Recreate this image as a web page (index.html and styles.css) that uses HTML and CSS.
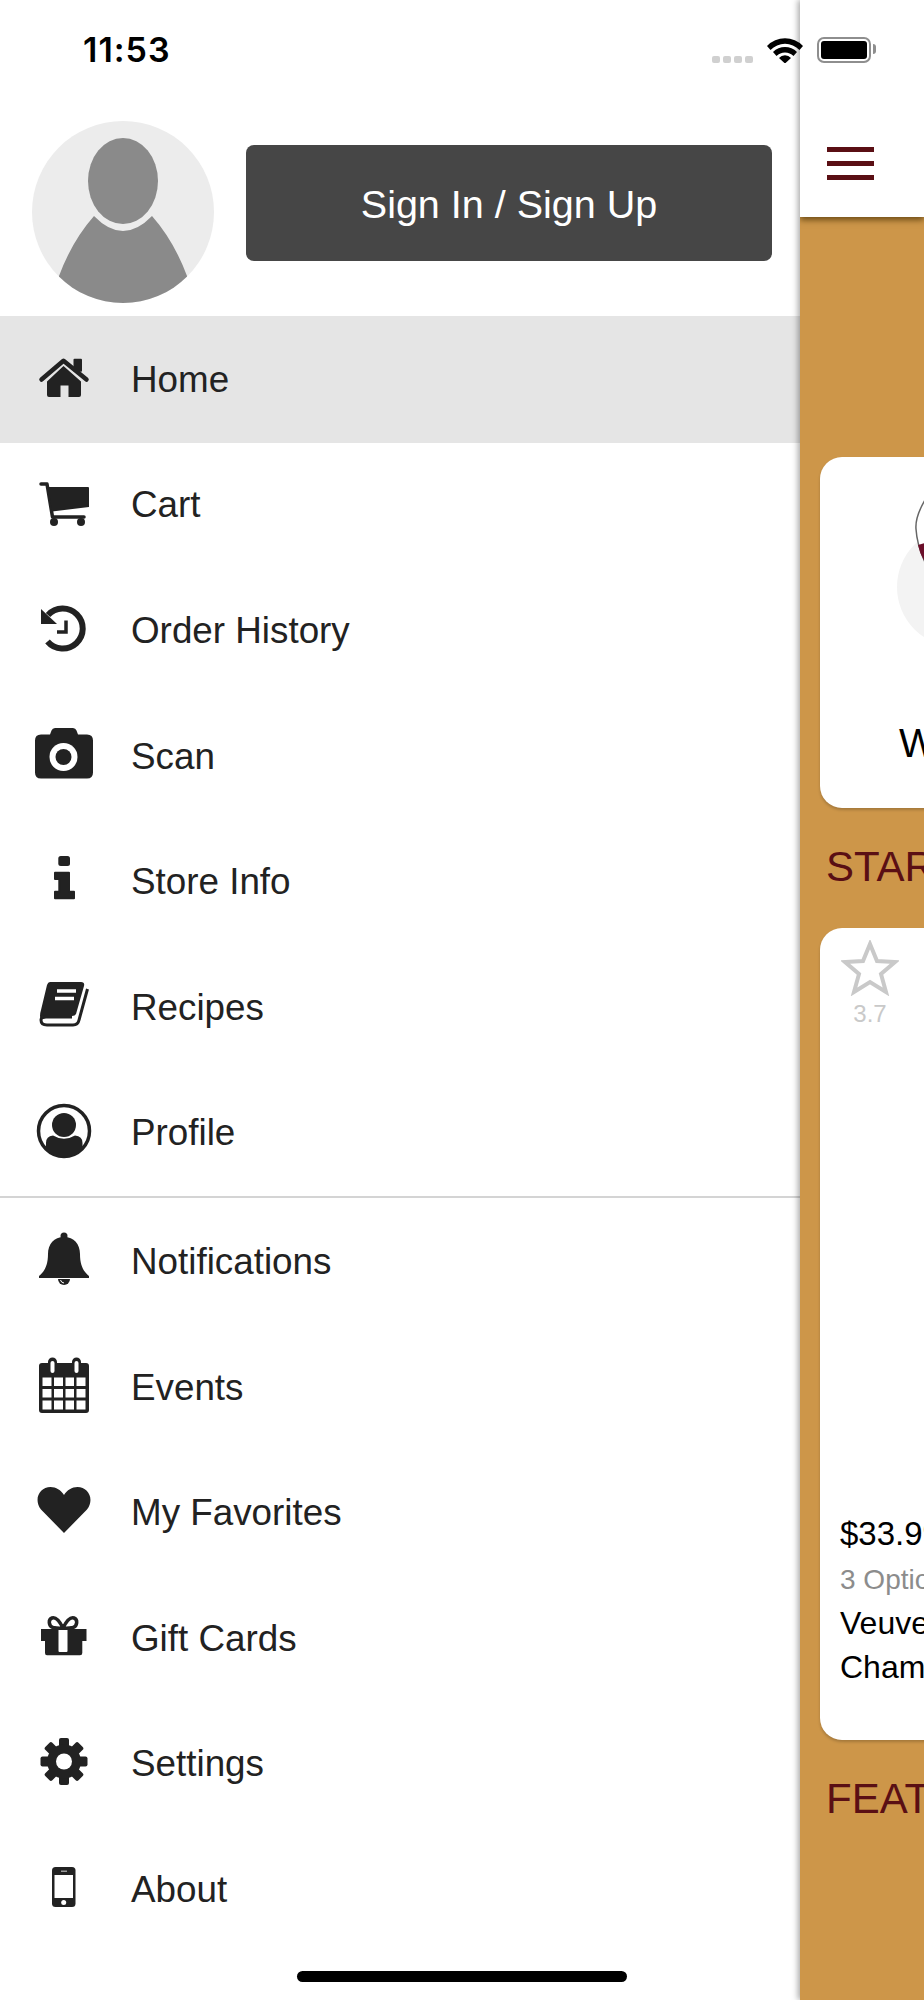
FILE: index.html
```html
<!DOCTYPE html>
<html lang="en">
<head>
    <meta charset="UTF-8">
    <meta name="viewport" content="width=device-width, initial-scale=1.0">
    <title>Menu</title>
    <link rel="stylesheet" href="styles.css">
</head>
<body>

<div class="app">
    <!-- Drawer -->
    <div class="drawer">
        <div class="account">
            <svg class="avatar" viewBox="0 0 182 182">
                <defs><clipPath id="avatarClip"><circle cx="91" cy="91" r="91"/></clipPath></defs>
                <circle cx="91" cy="91" r="91" fill="#ececec"/>
                <ellipse cx="91" cy="60" rx="35" ry="43" fill="#8a8a8a"/>
                <path clip-path="url(#avatarClip)" d="M62 95 Q40 120 27 155 L27 182 H155 V155 Q142 120 120 95 Q91 125 62 95 Z" fill="#8a8a8a"/>
            </svg>
            <div class="signin">Sign In / Sign Up</div>
        </div>

        <div class="menu">
            <div class="item active">
                <svg class="icon" viewBox="0 0 64 64"><path d="M31.500 18 L49 33.500 V47 Q49 49 47 49 H36.500 V37.500 H28.500 V49 H17 Q15 49 15 47 V33.500 Z" fill="currentColor"/><path d="M9.500 31.500 L31.500 12.800 L54.500 31.500" fill="none" stroke="currentColor" stroke-width="4.500" stroke-linecap="round" stroke-linejoin="round"/><rect x="41.500" y="10.800" width="8.500" height="13" rx="1" fill="currentColor"/></svg>
                <span>Home</span>
            </div>
            <div class="item">
                <svg class="icon" viewBox="0 0 64 64"><path d="M9 11 H15 L20.500 44 H52" fill="none" stroke="currentColor" stroke-width="3.500" stroke-linecap="round" stroke-linejoin="round"/><path d="M16.500 14 H56 Q57 14 57 15 V34 L20 38.500 Z" fill="currentColor"/><circle cx="22" cy="49" r="4" fill="currentColor"/><circle cx="49" cy="49" r="4" fill="currentColor"/></svg>
                <span>Cart</span>
            </div>
            <div class="item">
                <svg class="icon" viewBox="0 0 64 64"><path d="M16 16 A20 20 0 1 1 15.500 42.500" fill="none" stroke="currentColor" stroke-width="6"/><path d="M9 10 L25 25 H9 Z" fill="currentColor"/><path d="M25 33 H34 V21.500" fill="none" stroke="currentColor" stroke-width="3.500"/></svg>
                <span>Order History</span>
            </div>
            <div class="item">
                <svg class="icon" viewBox="0 0 64 64"><path d="M9 9.500 H18 L19.500 5.500 Q20.500 3 23 3 H41 Q43.500 3 44.500 5.500 L46 9.500 H55 Q61 9.500 61 15.500 V47.500 Q61 53.500 55 53.500 H9 Q3 53.500 3 47.500 V15.500 Q3 9.500 9 9.500 Z" fill="currentColor"/><circle cx="31.500" cy="32" r="14" fill="#fff"/><circle cx="31.500" cy="32" r="8" fill="currentColor"/></svg>
                <span>Scan</span>
            </div>
            <div class="item">
                <svg class="icon" viewBox="0 0 64 64"><rect x="26.300" y="6" width="11.700" height="10" rx="2.500" fill="currentColor"/><path d="M23 22.700 H37 V41.700 H42 V48.300 H23 V41.700 H27.300 V29 H23 Z" fill="currentColor" stroke="currentColor" stroke-width="2" stroke-linejoin="round"/></svg>
                <span>Store Info</span>
            </div>
            <div class="item">
                <svg class="icon" viewBox="0 0 64 64"><path d="M18 6 H49 Q53 6 52 10 L44 38 Q43 40 40 40 H14 Q9 40 8.500 44 L8 40 Q8 37 9 34 L15 9 Q16 6 18 6 Z" fill="currentColor"/><path d="M55.500 13 L47 44 Q46 49 41 49 H15 Q9 49 9 44 Q9 41 14 41 H40" fill="none" stroke="currentColor" stroke-width="3"/><path d="M25 15 H44 M23 22.500 H42" stroke="#fff" stroke-width="3.500"/></svg>
                <span>Recipes</span>
            </div>
            <div class="item">
                <svg class="icon" viewBox="0 0 64 64"><defs><clipPath id="profileClip"><circle cx="32" cy="30" r="26"/></clipPath></defs><circle cx="32" cy="30" r="25.500" fill="none" stroke="currentColor" stroke-width="3.500"/><circle cx="32" cy="24" r="12" fill="currentColor"/><path clip-path="url(#profileClip)" d="M14 58 V42 Q14 35 21 34.500 Q32 41 43 34.500 Q50.500 35 50.500 42 V58 Z" fill="currentColor"/></svg>
                <span>Profile</span>
            </div>
            <div class="separator"></div>
            <div class="item">
                <svg class="icon" viewBox="0 0 64 64"><circle cx="32" cy="6" r="3.500" fill="currentColor"/><path d="M32 7 C42 7 48 14 48 24 C48 36 52 42 57 46 V48 H7 V46 C12 42 16 36 16 24 C16 14 22 7 32 7 Z" fill="currentColor"/><path d="M26 49 A6 6 0 0 0 38 49 Z" fill="currentColor"/><path d="M28.500 50 A4 4 0 0 0 32 53" fill="none" stroke="#fff" stroke-width="1"/></svg>
                <span>Notifications</span>
            </div>
            <div class="item">
                <svg class="icon" viewBox="0 0 64 64"><path d="M10 7 H16 V6 A4.500 4.500 0 0 1 25 6 V7 H40 V6 A4.500 4.500 0 0 1 49 6 V7 H54 Q57 7 57 10 V54 Q57 57 54 57 H10 Q7 57 7 54 V10 Q7 7 10 7 Z" fill="currentColor"/>
                    <g fill="#fff">
                        <rect x="18.500" y="5" width="4" height="12" rx="2"/><rect x="42.500" y="5" width="4" height="12" rx="2"/>
                        <rect x="10.500" y="21.500" width="9" height="8.500"/><rect x="22" y="21.500" width="9" height="8.500"/><rect x="33.500" y="21.500" width="8.500" height="8.500"/><rect x="44.500" y="21.500" width="9" height="8.500"/>
                        <rect x="10.500" y="33" width="9" height="8.500"/><rect x="22" y="33" width="9" height="8.500"/><rect x="33.500" y="33" width="8.500" height="8.500"/><rect x="44.500" y="33" width="9" height="8.500"/>
                        <rect x="10.500" y="44.500" width="9" height="9"/><rect x="22" y="44.500" width="9" height="9"/><rect x="33.500" y="44.500" width="8.500" height="9"/><rect x="44.500" y="44.500" width="9" height="9"/>
                    </g>
                </svg>
                <span>Events</span>
            </div>
            <div class="item">
                <svg class="icon" viewBox="0 0 64 64"><path d="M32 52 L9 28.500 C1 18 8 6 18.500 6 C24 6 29 9 32 14 C35 9 40 6 45.500 6 C56 6 63 18 55 28.500 Z" fill="currentColor"/></svg>
                <span>My Favorites</span>
            </div>
            <div class="item">
                <svg class="icon" viewBox="0 0 64 64"><path d="M9 22 H54.500 V34 H50.300 V46 Q50.300 48.300 48 48.300 H15 Q13 48.300 13 46 V34 H9 Z" fill="currentColor"/><rect x="26.500" y="22" width="9" height="23" rx="1" fill="#fff"/><path d="M31 21 C27 13 23 10 20 11 C16 12.500 16.500 19 21 20.500 Q26 21.500 31 21 Q36 21.500 41 20.500 C45.500 19 46 12.500 42 11 C39 10 35 13 31 21" fill="none" stroke="currentColor" stroke-width="3.500"/></svg>
                <span>Gift Cards</span>
            </div>
            <div class="item">
                <svg class="icon" viewBox="0 0 64 64"><g fill="currentColor"><rect x="27" y="6" width="10" height="47" rx="2"/><rect x="27" y="6" width="10" height="47" rx="2" transform="rotate(45 32 29.500)"/><rect x="27" y="6" width="10" height="47" rx="2" transform="rotate(90 32 29.500)"/><rect x="27" y="6" width="10" height="47" rx="2" transform="rotate(135 32 29.500)"/><circle cx="32" cy="29.500" r="17"/></g><circle cx="32" cy="29.500" r="8" fill="#fff"/></svg>
                <span>Settings</span>
            </div>
            <div class="item">
                <svg class="icon" viewBox="0 0 64 64"><rect x="20" y="9" width="23.500" height="40" rx="3.500" fill="currentColor"/><rect x="22.500" y="17" width="18.500" height="23" fill="#fff"/><rect x="29" y="12.500" width="6" height="1.500" fill="#999"/><circle cx="31.700" cy="44.500" r="2.500" fill="#fff"/></svg>
                <span>About</span>
            </div>
        </div>
    </div>

    <!-- Page behind the drawer -->
    <div class="page">
        <div class="topbar">
            <div class="burger"><i></i><i></i><i></i></div>
        </div>
        <div class="content">
            <div class="category">
                <svg class="glass" viewBox="0 0 60 160">
                    <circle cx="65" cy="92" r="60" fill="#f3f3f3"/>
                    <path d="M33 5 Q23 22 24 34 Q25 50 33 67 Z" fill="#fff"/>
                    <path d="M33 5 Q23 22 24 34 Q25 50 33 67" fill="none" stroke="#666" stroke-width="1.500"/>
                    <path d="M26 50 Q28 60 33 67 V48 Z" fill="#6b0f2a"/>
                </svg>
                <div class="category-name">Wines</div>
            </div>

            <h2 class="section">STARRED</h2>

            <div class="product">
                <div class="rating">
                    <svg class="star" viewBox="0 0 58 56"><path d="M29 4 L36 21 L54 22 L40 34 L45 52 L29 42 L13 52 L18 34 L4 22 L22 21 Z" fill="none" stroke="#c9c9c9" stroke-width="4"/></svg>
                    <span>3.7</span>
                </div>
                <div class="details">
                    <div class="price">$33.99</div>
                    <div class="options">3 Options</div>
                    <div class="name">Veuve Clicquot</div>
                    <div class="name">Champagne</div>
                </div>
            </div>

            <h2 class="section">FEATURED</h2>
        </div>
    </div>
</div>

<!-- Status bar and home indicator sit over everything -->
<div class="statusbar">
    <div class="time">11:53</div>
    <div class="status-icons">
        <div class="signal"><i></i><i></i><i></i><i></i></div>
        <svg class="wifi" viewBox="0 0 36 26"><path d="M0 9 A25 25 0 0 1 36 9 L32.500 13 A20 20 0 0 0 3.500 13 Z M6 15 A17 17 0 0 1 30 15 L26.500 19 A12 12 0 0 0 9.500 19 Z" fill="#000"/><path d="M12 21 A8 8 0 0 1 24 21 L18 26.500 Z" fill="#000"/></svg>
        <div class="battery"><div class="battery-fill"></div></div>
    </div>
</div>
<div class="home-indicator"></div>

</body>
</html>
```

FILE: styles.css
```css
html, body {
    margin: 0;
    padding: 0;
}

body {
    width: 924px;
    height: 2000px;
    overflow: hidden;
    position: relative;
    background-color: #fff;
    font-family: "Liberation Sans", Arial, sans-serif;
}

.app {
    display: flex;
    height: 2000px;
}

/* Drawer */
.drawer {
    width: 800px;
    flex: none;
    padding-top: 121px;
    box-sizing: border-box;
}

.account {
    display: flex;
    align-items: flex-start;
    padding-left: 32px;
    height: 195px;
}

.avatar {
    width: 182px;
    height: 182px;
    flex: none;
}

.signin {
    width: 526px;
    height: 116px;
    margin-top: 24px;
    margin-left: 32px;
    padding-top: 3px;
    box-sizing: border-box;
    background-color: #464646;
    border-radius: 8px;
    color: #fff;
    font-size: 39.5px;
    display: flex;
    justify-content: center;
    align-items: center;
}

.item {
    height: 125.6px;
    padding-top: 2px;
    box-sizing: border-box;
    display: flex;
    align-items: center;
    color: #222;
    font-size: 36.8px;
}

.item.active {
    height: 127px;
    padding-top: 0;
    margin-bottom: -1.4px;
    background-color: #e5e5e5;
}

.icon {
    width: 64px;
    height: 64px;
    flex: none;
    margin-left: 32px;
    margin-right: 35px;
}

.separator {
    height: 2px;
    margin-top: 1px;
    background-color: #d4d4d4;
}

/* Page behind */
.page {
    flex: 1;
    min-width: 0;
    overflow: hidden;
    background-color: #cd9649;
    box-shadow: -2px 0 6px rgba(0, 0, 0, 0.35);
    position: relative;
}

.topbar {
    height: 217px;
    background-color: #fff;
    box-shadow: 0 3px 6px rgba(70, 45, 0, 0.7);
    display: flex;
    align-items: center;
    padding-left: 27px;
    padding-top: 118px;
    box-sizing: border-box;
    position: relative;
}

.burger {
    width: 47px;
    margin-top: 1px;
}

.burger i {
    display: block;
    height: 5px;
    margin-bottom: 9px;
    background-color: #5a0f14;
}

.content {
    padding: 240px 0 0 20px;
}

.category {
    width: 400px;
    height: 351px;
    background-color: #fff;
    border-radius: 22px;
    box-shadow: 0 2px 3px rgba(0, 0, 0, 0.2);
    box-sizing: border-box;
    padding-left: 77px;
    padding-top: 38px;
}

.glass {
    display: block;
    width: 60px;
    height: 160px;
    margin-left: -5px;
    overflow: hidden;
}

.category-name {
    margin-top: 65px;
    margin-left: 2px;
    font-size: 40px;
    line-height: 46px;
    color: #000;
    white-space: nowrap;
}

.section {
    margin: 0;
    height: 120px;
    padding-left: 6px;
    padding-top: 35px;
    box-sizing: border-box;
    font-size: 42px;
    line-height: 48px;
    font-weight: normal;
    color: #5a0f14;
    white-space: nowrap;
}

.product {
    width: 400px;
    height: 812px;
    background-color: #fff;
    border-radius: 22px;
    box-shadow: 0 2px 3px rgba(0, 0, 0, 0.2);
    box-sizing: border-box;
    padding: 12px 0 0 20px;
    display: flex;
    flex-direction: column;
    justify-content: space-between;
}

.rating {
    width: 58px;
    margin-left: 1px;
    display: flex;
    flex-direction: column;
    align-items: center;
    font-size: 24px;
    color: #c9c9c9;
}

.star {
    width: 58px;
    height: 56px;
    margin-bottom: 4px;
}

.details {
    padding-bottom: 51px;
    white-space: nowrap;
}

.price {
    font-size: 33px;
    line-height: 50px;
    color: #000;
}

.options {
    font-size: 28px;
    line-height: 42px;
    color: #8c8c8c;
}

.name {
    font-size: 32px;
    line-height: 44px;
    color: #000;
}

/* Status bar */
.statusbar {
    position: absolute;
    top: 0;
    left: 0;
    width: 924px;
    height: 100px;
}

.time {
    position: absolute;
    left: 83px;
    top: 30px;
    font-family: Inter, sans-serif;
    font-weight: 600;
    font-size: 34px;
    letter-spacing: 1px;
    line-height: 40px;
    color: #000;
}

.status-icons {
    position: absolute;
    top: 37px;
    left: 712px;
    display: flex;
    align-items: flex-start;
}

.signal {
    display: flex;
    gap: 3px;
    margin-top: 19px;
}

.signal i {
    width: 8px;
    height: 7px;
    border-radius: 2px;
    background-color: #d0d0d0;
}

.wifi {
    width: 36px;
    height: 26px;
    margin-left: 14px;
}

.battery {
    width: 54px;
    height: 26px;
    margin-left: 14px;
    box-sizing: border-box;
    border: 2px solid #8e8e8e;
    border-radius: 7px;
    padding: 2px;
    position: relative;
}

.battery::after {
    content: "";
    position: absolute;
    top: 5px;
    right: -7px;
    width: 3px;
    height: 10px;
    border-radius: 0 3px 3px 0;
    background-color: #8e8e8e;
}

.battery-fill {
    height: 100%;
    background-color: #000;
    border-radius: 3px;
}

.home-indicator {
    position: absolute;
    left: 297px;
    top: 1971px;
    width: 330px;
    height: 11px;
    border-radius: 6px;
    background-color: #000;
}
```
